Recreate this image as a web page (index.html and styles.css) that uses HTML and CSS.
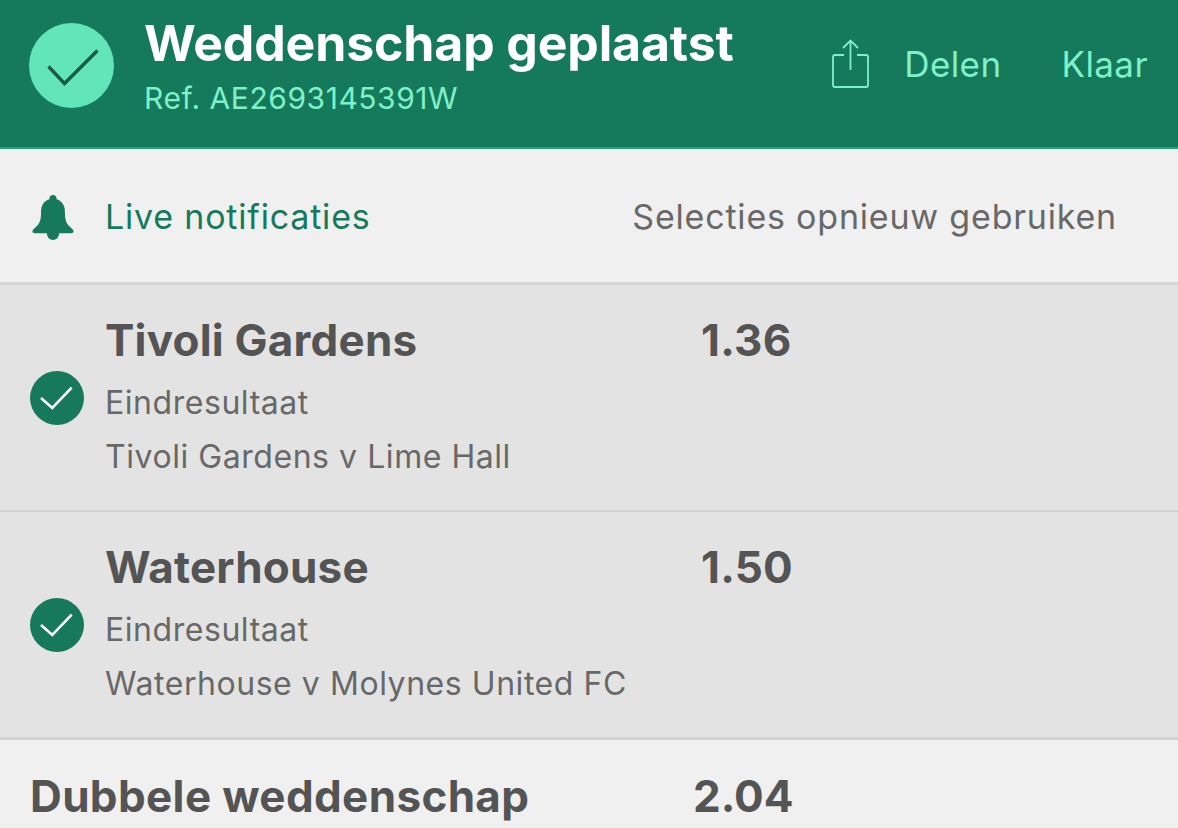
FILE: index.html
```html
<!DOCTYPE html>
<html lang="nl">
<head>
  <meta charset="UTF-8" />
  <meta name="viewport" content="width=device-width, initial-scale=1" />
  <title>Weddenschap geplaatst</title>
  <link rel="stylesheet" href="styles.css">
</head>
<body>

  <header class="header">
    <div class="badge">
      <svg width="54" height="44" viewBox="0 0 54 44"><path d="M3.500 22.500 L19.500 39.500 L52.500 6.500" fill="none" stroke="#1a5a47" stroke-width="3.400"/></svg>
    </div>
    <div class="header-text">
      <h1>Weddenschap geplaatst</h1>
      <div class="ref">Ref. AE2693145391W</div>
    </div>
    <div class="share">
      <svg width="38" height="50" viewBox="0 0 38 50"><path d="M12 16 H3 Q1 16 1 18 V46 Q1 48 3 48 H34 Q36 48 36 46 V18 Q36 16 34 16 H25 M18.500 31 V2 M11 9 L18.500 1.500 L26 9" fill="none" stroke="#7ff0c8" stroke-width="1.800"/></svg>
      <span>Delen</span>
    </div>
    <div class="done">Klaar</div>
  </header>

  <div class="actions">
    <svg class="bell" width="42" height="48" viewBox="0 0 44 48"><path d="M22 1 C24.500 1 26 3 25.800 5.500 C32 7.500 34.500 12 34.500 19 C34.500 27 36 31 40 34.500 C42 36.300 43.500 37.500 43.500 39 C43.500 40.500 42.500 41 41 41 H3 C1.500 41 .500 40.500 .500 39 C.500 37.500 2 36.300 4 34.500 C8 31 9.500 27 9.500 19 C9.500 12 12 7.500 18.200 5.500 C18 3 19.500 1 22 1 Z M15.500 41 H28.500 C28 45.500 25.500 48 22 48 C18.500 48 16 45.500 15.500 41 Z" fill="#17795b"/></svg>
    <span class="live">Live notificaties</span>
    <span class="reuse">Selecties opnieuw gebruiken</span>
  </div>

  <section class="selection">
    <div class="tick">
      <svg width="34" height="28" viewBox="0 0 34 28"><path d="M1 14 L12.300 24 L31.700 3.700" fill="none" stroke="#fff" stroke-width="2.600"/></svg>
    </div>
    <div class="info">
      <div class="top-row">
        <div class="team">Tivoli Gardens</div>
        <div class="odds">1.36</div>
      </div>
      <div class="market">Eindresultaat</div>
      <div class="match">Tivoli Gardens v Lime Hall</div>
    </div>
  </section>

  <section class="selection">
    <div class="tick">
      <svg width="34" height="28" viewBox="0 0 34 28"><path d="M1 14 L12.300 24 L31.700 3.700" fill="none" stroke="#fff" stroke-width="2.600"/></svg>
    </div>
    <div class="info">
      <div class="top-row">
        <div class="team">Waterhouse</div>
        <div class="odds">1.50</div>
      </div>
      <div class="market">Eindresultaat</div>
      <div class="match">Waterhouse v Molynes United FC</div>
    </div>
  </section>

  <footer class="total">
    <div class="total-name">Dubbele weddenschap</div>
    <div class="total-odds">2.04</div>
  </footer>

</body>
</html>
```

FILE: styles.css
```css
* {
  box-sizing: border-box;
}
body {
  margin: 0;
  height: 828px;
  overflow: hidden;
  font-family: Inter, "Noto Sans", sans-serif;
  background-color: #f0f0f0;
}
.header {
  display: flex;
  align-items: flex-start;
  height: 149px;
  padding: 23px 30px 0 29px;
  background-color: #15795b;
  border-bottom: 2px solid #2c9c7c;
}
.badge {
  display: flex;
  align-items: center;
  justify-content: center;
  width: 85px;
  height: 85px;
  border-radius: 50%;
  background-color: #62e5b8;
  flex-shrink: 0;
}
.header-text {
  margin-left: 30px;
  flex: 1;
}
h1 {
  margin: -6px 0 0;
  font-size: 50px;
  line-height: 52px;
  font-weight: 700;
  color: #fff;
  letter-spacing: -0.15px;
}
.ref {
  margin-top: 12px;
  font-size: 30px;
  line-height: 34px;
  letter-spacing: 0.55px;
  color: #7ff0c8;
}
.share {
  display: flex;
  align-items: center;
  gap: 34px;
  margin-top: 14px;
  font-size: 35px;
  line-height: 54px;
  letter-spacing: 0.4px;
  color: #7ff0c8;
}
.done {
  margin: 14px 0 0 60px;
  font-size: 35px;
  line-height: 54px;
  letter-spacing: 0.4px;
  color: #7ff0c8;
}
.actions {
  display: flex;
  align-items: center;
  height: 136px;
  padding: 2px 61px 0 32px;
  border-bottom: 3px solid #d6d6d6;
  font-size: 34px;
  letter-spacing: 0.8px;
}
.live {
  margin-left: 31px;
  flex: 1;
  color: #17795b;
}
.reuse {
  color: #686868;
}
.selection {
  display: flex;
  align-items: center;
  height: 227px;
  padding-left: 30px;
  background-color: #e3e3e3;
  border-bottom: 2px solid #d2d2d2;
}
.selection + .total {
  border-top: 1px solid #d2d2d2;
}
.tick {
  display: flex;
  align-items: center;
  justify-content: center;
  width: 54px;
  height: 54px;
  border-radius: 50%;
  background-color: #17795b;
  flex-shrink: 0;
}
.info {
  margin-left: 21px;
  padding-bottom: 8px;
}
.top-row {
  display: flex;
  align-items: center;
  height: 72px;
}
.team {
  width: 596px;
  font-size: 44px;
  font-weight: 700;
  letter-spacing: 0.2px;
  color: #545454;
}
.odds {
  font-size: 44px;
  font-weight: 700;
  letter-spacing: 0.2px;
  color: #545454;
}
.market, .match {
  font-size: 32px;
  line-height: 54px;
  letter-spacing: 0.55px;
  color: #686868;
}
.total {
  display: flex;
  align-items: center;
  padding: 29px 0 0 30px;
  color: #545454;
  font-size: 44px;
  font-weight: 700;
  letter-spacing: 0.35px;
}
.total-name {
  width: 663px;
}
.total-odds {
  letter-spacing: 0;
}
```
